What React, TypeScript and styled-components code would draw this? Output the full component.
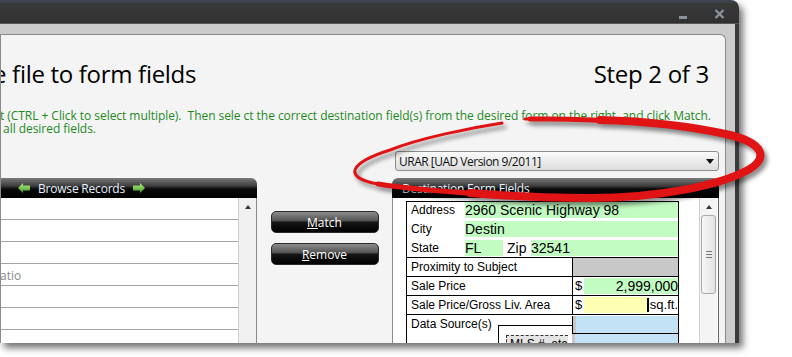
import { createGlobalStyle, styled } from "styled-components"

const GlobalStyle = createGlobalStyle`
  html, body {
    margin: 0;
    padding: 0;
    background: #ffffff;
  }
  body {
    font-family: "Open Sans", "Liberation Sans", sans-serif;
  }
`

const uiFont = `"Open Sans", "Liberation Sans", sans-serif`
const formFont = `"Liberation Sans", Arial, sans-serif`

const browseRows = ["", "", "", "atio", "", "", ""]

const ArrowIcon = ({ flip }: { flip?: boolean }) => (
    <svg width="12" height="10" viewBox="0 0 12 10" style={{ transform: flip ? "scaleX(-1)" : undefined }}>
        <defs>
            <linearGradient id="arrowGreen" x1="0" y1="0" x2="0" y2="1">
                <stop offset="0" stopColor="#b8f08a" />
                <stop offset="1" stopColor="#3f9a22" />
            </linearGradient>
        </defs>
        <polygon points="0,5 5,0 5,2.6 12,2.6 12,7.4 5,7.4 5,10" fill="url(#arrowGreen)" />
    </svg>
)

const App = () => {
    return (
        <>
            <GlobalStyle />
            <Page>
                <Window>
                    <TitleBar>
                        <Minimize />
                        <CloseIcon width="11" height="10" viewBox="0 0 11 10">
                            <path d="M1.5 1 L9.5 9 M9.5 1 L1.5 9" stroke="#8a929c" strokeWidth="2.4" />
                        </CloseIcon>
                    </TitleBar>
                    <Frame>
                        <Content>
                            <TitleRow>
                                <Title>e file to form fields</Title>
                                <Title>Step 2 of 3</Title>
                            </TitleRow>
                            <Instructions>
                                <div>t (CTRL + Click to select multiple).&nbsp; Then sele ct the correct destination field(s) from the desired form on the right, and click Match.</div>
                                <div>&nbsp;all desired fields.</div>
                            </Instructions>
                            <SelectRow>
                                <FormSelect>
                                    URAR [UAD Version 9/2011]
                                    <Caret />
                                </FormSelect>
                            </SelectRow>
                            <PanelsRow>
                                <Panel $width={256}>
                                    <PanelHeader $radius="0 6px 0 0" $pad={17}>
                                        <ArrowIcon />
                                        <span>Browse Records</span>
                                        <ArrowIcon flip />
                                    </PanelHeader>
                                    <BrowseBody>
                                        <RecordList>
                                            {browseRows.map((text, i) => (
                                                <RecordRow key={i}>{text}</RecordRow>
                                            ))}
                                        </RecordList>
                                        <ScrollColumn $bg="#f0f0f0">
                                            <UpArrow />
                                        </ScrollColumn>
                                    </BrowseBody>
                                </Panel>
                                <ButtonColumn>
                                    <ActionButton><u>M</u>atch</ActionButton>
                                    <ActionButton><u>R</u>emove</ActionButton>
                                </ButtonColumn>
                                <Panel $width={327}>
                                    <PanelHeader $radius="6px 6px 0 0" $pad={10}>
                                        <span>Destination Form Fields</span>
                                    </PanelHeader>
                                    <DestBody>
                                        <FormArea>
                                            <FormTable>
                                                <AddressBlock>
                                                    <AddrLine>
                                                        <FieldLabel $width={58}>Address</FieldLabel>
                                                        <Field $bg="#c2fcc2">2960 Scenic Highway 98</Field>
                                                    </AddrLine>
                                                    <AddrLine>
                                                        <FieldLabel $width={58}>City</FieldLabel>
                                                        <Field $bg="#c2fcc2">Destin</Field>
                                                    </AddrLine>
                                                    <AddrLine>
                                                        <FieldLabel $width={58}>State</FieldLabel>
                                                        <Field $bg="#c2fcc2" $width={38}>FL</Field>
                                                        <FieldLabel $width={28} $size={14}>Zip</FieldLabel>
                                                        <Field $bg="#c2fcc2">32541</Field>
                                                    </AddrLine>
                                                </AddressBlock>
                                                <GridRow>
                                                    <RowLabel>Proximity to Subject</RowLabel>
                                                    <RowCell $bg="#c8c8c8" />
                                                </GridRow>
                                                <GridRow>
                                                    <RowLabel>Sale Price</RowLabel>
                                                    <RowCell>
                                                        <Dollar>$</Dollar>
                                                        <Field $bg="#c2fcc2" $align="right">2,999,000</Field>
                                                    </RowCell>
                                                </GridRow>
                                                <GridRow>
                                                    <RowLabel>Sale Price/Gross Liv. Area</RowLabel>
                                                    <RowCell>
                                                        <Dollar>$</Dollar>
                                                        <Field $bg="#ffffb4" />
                                                        <Cursor />
                                                        <Unit>sq.ft.</Unit>
                                                    </RowCell>
                                                </GridRow>
                                                <DataRow>
                                                    <DataLeft>
                                                        <RowLabel>Data Source(s)</RowLabel>
                                                        <NestedBox>
                                                            <DashedBox>MLS #, etc</DashedBox>
                                                        </NestedBox>
                                                    </DataLeft>
                                                    <DataRight>
                                                        <BlueCell $top />
                                                        <BlueCell />
                                                    </DataRight>
                                                </DataRow>
                                            </FormTable>
                                        </FormArea>
                                        <ScrollColumn $bg="#f4f4f4">
                                            <UpArrow />
                                            <Thumb>
                                                <Grip />
                                            </Thumb>
                                        </ScrollColumn>
                                    </DestBody>
                                </Panel>
                            </PanelsRow>
                        </Content>
                    </Frame>
                </Window>
                <Highlight width="792" height="357" viewBox="0 0 792 357">
                    <g fill="none" stroke="#e01414" strokeLinecap="round" strokeLinejoin="round">
                        <path
                            d="M502 123 C470 128, 420 138, 390 150 C352 162, 340 177, 378 184 C430 192, 520 197, 590 198 C660 198, 720 185, 748 170 C770 157, 762 143, 730 135 C680 124, 600 118, 525 119"
                            strokeWidth="3"
                        />
                        <path
                            d="M378 184 C430 192, 520 197, 590 198 C660 198, 720 185, 748 170 C770 157, 762 143, 730 135 C680 124, 600 118, 530 119"
                            strokeWidth="5"
                        />
                        <path
                            d="M470 193 C520 197, 560 198, 590 198 C660 198, 720 185, 748 170 C770 157, 762 143, 730 135 C690 126, 640 121, 600 120"
                            strokeWidth="8"
                        />
                    </g>
                </Highlight>
            </Page>
        </>
    )
}

export default App

const Page = styled.div`
    position: relative;
    width: 792px;
    height: 357px;
    overflow: hidden;
    background: #ffffff;
`

const Window = styled.div`
    width: 739px;
    height: 343px;
    display: flex;
    flex-direction: column;
    border-top-right-radius: 8px;
    overflow: hidden;
    box-shadow: 4px 5px 7px rgba(0, 0, 0, 0.55);
`

const TitleBar = styled.div`
    height: 24px;
    flex-shrink: 0;
    display: flex;
    justify-content: flex-end;
    align-items: flex-start;
    gap: 27px;
    padding: 9px 14px 0 0;
    box-sizing: border-box;
    background: linear-gradient(#40444e 0, #40444e 2px, #3a3a3a 3px, #323232 20px, #2e2e2e 24px);
    border-bottom: 1px solid #575757;
`

const Minimize = styled.span`
    width: 8px;
    height: 3px;
    margin-top: 7px;
    background: #8a929c;
`

const CloseIcon = styled.svg`
    display: block;
`

const Frame = styled.div`
    flex: 1;
    display: flex;
    min-height: 0;
    background: #cbcbcb;
    padding: 10px 9px 0 0;
    border-right: 4px solid #3a3a3a;
`

const Content = styled.div`
    flex: 1;
    display: flex;
    flex-direction: column;
    min-width: 0;
    background: #f4f4f4;
    border: 1px solid #8a8a8a;
    border-bottom: 0;
    border-top-right-radius: 6px;
    overflow: hidden;
`

const TitleRow = styled.div`
    display: flex;
    justify-content: space-between;
    align-items: baseline;
    margin-top: 23px;
    padding-right: 16px;
`

const Title = styled.div`
    font-family: ${uiFont};
    font-size: 24px;
    line-height: 32px;
    letter-spacing: -0.3px;
    color: #000;
    white-space: nowrap;
    &:first-child {
        margin-left: -8px;
    }
`

const Instructions = styled.div`
    margin-top: 19px;
    margin-left: -1px;
    font-family: ${uiFont};
    font-size: 12px;
    line-height: 13px;
    letter-spacing: -0.05px;
    color: #1e8a1e;
    white-space: nowrap;
`

const SelectRow = styled.div`
    display: flex;
    justify-content: flex-end;
    margin-top: 16px;
    padding-right: 6px;
`

const FormSelect = styled.div`
    width: 324px;
    height: 20px;
    box-sizing: border-box;
    display: flex;
    align-items: center;
    justify-content: space-between;
    padding: 0 4px 0 3px;
    border: 1px solid #8d8d8d;
    border-radius: 3px;
    background: linear-gradient(#fbfbfb, #ebebeb 50%, #dcdcdc);
    font-family: ${uiFont};
    font-size: 12px;
    letter-spacing: -0.5px;
    color: #111;
`

const Caret = styled.span`
    width: 0;
    height: 0;
    border-left: 4px solid transparent;
    border-right: 4px solid transparent;
    border-top: 5px solid #111;
`

const PanelsRow = styled.div`
    flex: 1;
    display: flex;
    min-height: 0;
    margin-top: 7px;
    padding-right: 6px;
`

const Panel = styled.div<{ $width: number }>`
    width: ${p => p.$width}px;
    flex-shrink: 0;
    display: flex;
    flex-direction: column;
`

const PanelHeader = styled.div<{ $radius: string; $pad: number }>`
    height: 20px;
    flex-shrink: 0;
    display: flex;
    align-items: center;
    gap: 8px;
    padding-left: ${p => p.$pad}px;
    border-radius: ${p => p.$radius};
    background: linear-gradient(#7a7a7a 0%, #3c3c3c 40%, #0a0a0a 55%, #000 100%);
    font-family: ${uiFont};
    font-size: 12px;
    letter-spacing: -0.2px;
    color: #e6f1ff;
`

const BrowseBody = styled.div`
    flex: 1;
    display: flex;
    background: #fff;
    border-right: 1px solid #8a8a8a;
`

const RecordList = styled.div`
    flex: 1;
    display: flex;
    flex-direction: column;
    overflow: hidden;
`

const RecordRow = styled.div`
    height: 22px;
    flex-shrink: 0;
    box-sizing: border-box;
    padding-top: 3px;
    border-bottom: 1px solid #a5a5a5;
    margin-left: -1px;
    font-family: ${uiFont};
    font-size: 12px;
    line-height: 18px;
    color: #8a8a8a;
`

const ScrollColumn = styled.div<{ $bg: string }>`
    width: 17px;
    flex-shrink: 0;
    display: flex;
    flex-direction: column;
    align-items: center;
    padding-top: 7px;
    background: ${p => p.$bg};
    border-left: 1px solid #d0d0d0;
`

const UpArrow = styled.span`
    width: 0;
    height: 0;
    border-left: 3px solid transparent;
    border-right: 3px solid transparent;
    border-bottom: 4px solid #333;
`

const Thumb = styled.div`
    width: 15px;
    height: 79px;
    margin-top: 6px;
    box-sizing: border-box;
    display: flex;
    align-items: center;
    justify-content: center;
    border: 1px solid #a9a9a9;
    border-radius: 3px;
    background: linear-gradient(to right, #f7f7f7, #e2e2e2);
`

const Grip = styled.span`
    width: 6px;
    height: 5px;
    border-top: 1px solid #777;
    border-bottom: 1px solid #777;
    background: linear-gradient(transparent 2px, #777 2px, #777 3px, transparent 3px);
`

const ButtonColumn = styled.div`
    flex: 1;
    display: flex;
    flex-direction: column;
    align-items: center;
    gap: 10px;
    padding-top: 33px;
`

const ActionButton = styled.button`
    width: 108px;
    height: 22px;
    border: 1px solid #2a2a2a;
    border-radius: 5px;
    background: linear-gradient(#8c8c8c 0%, #555 42%, #151515 52%, #000 100%);
    color: #fff;
    font-family: ${uiFont};
    font-size: 12px;
    padding: 0;
    cursor: pointer;
`

const DestBody = styled.div`
    flex: 1;
    display: flex;
    min-height: 0;
    background: #fff;
    border-left: 1px solid #8a8a8a;
    border-right: 1px solid #666;
    padding-right: 1px;
`

const FormArea = styled.div`
    flex: 1;
    padding: 3px 0 0 13px;
    overflow: hidden;
`

const FormTable = styled.div`
    width: 273px;
    box-sizing: border-box;
    border: 1px solid #000;
    border-bottom: 0;
    font-family: ${formFont};
    color: #000;
`

const AddressBlock = styled.div`
    display: flex;
    flex-direction: column;
    gap: 3px;
    padding-bottom: 1px;
`

const AddrLine = styled.div`
    height: 16px;
    display: flex;
    align-items: center;
`

const FieldLabel = styled.span<{ $width: number; $size?: number }>`
    width: ${p => p.$width}px;
    flex-shrink: 0;
    box-sizing: border-box;
    padding-left: 4px;
    font-size: ${p => p.$size ?? 12}px;
`

const Field = styled.span<{ $bg: string; $width?: number; $align?: string }>`
    ${p => (p.$width ? `width: ${p.$width}px; flex-shrink: 0;` : "flex: 1;")}
    align-self: stretch;
    background: ${p => p.$bg};
    font-size: 14px;
    line-height: 16px;
    text-align: ${p => p.$align ?? "left"};
    white-space: nowrap;
`

const GridRow = styled.div`
    height: 19px;
    box-sizing: border-box;
    display: grid;
    grid-template-columns: 165px 1fr;
    border-top: 1px solid #000;
`

const RowLabel = styled.div`
    padding-left: 4px;
    font-size: 12px;
    line-height: 18px;
    white-space: nowrap;
`

const RowCell = styled.div<{ $bg?: string }>`
    display: flex;
    padding: 1px 0;
    border-left: 1px solid #000;
    background: ${p => p.$bg ?? "#fff"};
`

const Dollar = styled.span`
    width: 11px;
    flex-shrink: 0;
    padding-left: 2px;
    box-sizing: border-box;
    font-size: 13px;
    line-height: 15px;
`

const Cursor = styled.span`
    width: 2px;
    margin: 1px 0;
    background: #000;
`

const Unit = styled.span`
    padding-left: 1px;
    font-size: 13px;
    line-height: 16px;
`

const DataRow = styled.div`
    height: 40px;
    display: grid;
    grid-template-columns: 165px 1fr;
    border-top: 1px solid #000;
`

const DataLeft = styled.div`
    display: flex;
    flex-direction: column;
`

const NestedBox = styled.div`
    margin: -8px 0 0 91px;
    flex: 1;
    border-top: 1px solid #000;
    border-left: 1px solid #000;
    padding: 9px 0 0 7px;
`

const DashedBox = styled.div`
    width: 58px;
    height: 14px;
    border: 1px dashed #333;
    border-right: 0;
    background: #e4e4e4;
    padding-left: 3px;
    font-size: 12px;
    line-height: 16px;
    overflow: hidden;
`

const DataRight = styled.div`
    display: flex;
    flex-direction: column;
`

const BlueCell = styled.div<{ $top?: boolean }>`
    height: ${p => (p.$top ? "18px" : "auto")};
    flex: ${p => (p.$top ? "0 0 18px" : "1")};
    box-sizing: border-box;
    border-left: ${p => (p.$top ? "1px solid #000" : "0")};
    border-bottom: ${p => (p.$top ? "1px solid #000" : "0")};
    background: linear-gradient(to right, #c8c8c8 0, #c8c8c8 3px, #c4e2f5 3px);
    margin-top: ${p => (p.$top ? "1px" : "0")};
`

const Highlight = styled.svg`
    position: absolute;
    top: 0;
    left: 0;
    pointer-events: none;
    filter: drop-shadow(3px 4px 2px rgba(0, 0, 0, 0.45));
`
